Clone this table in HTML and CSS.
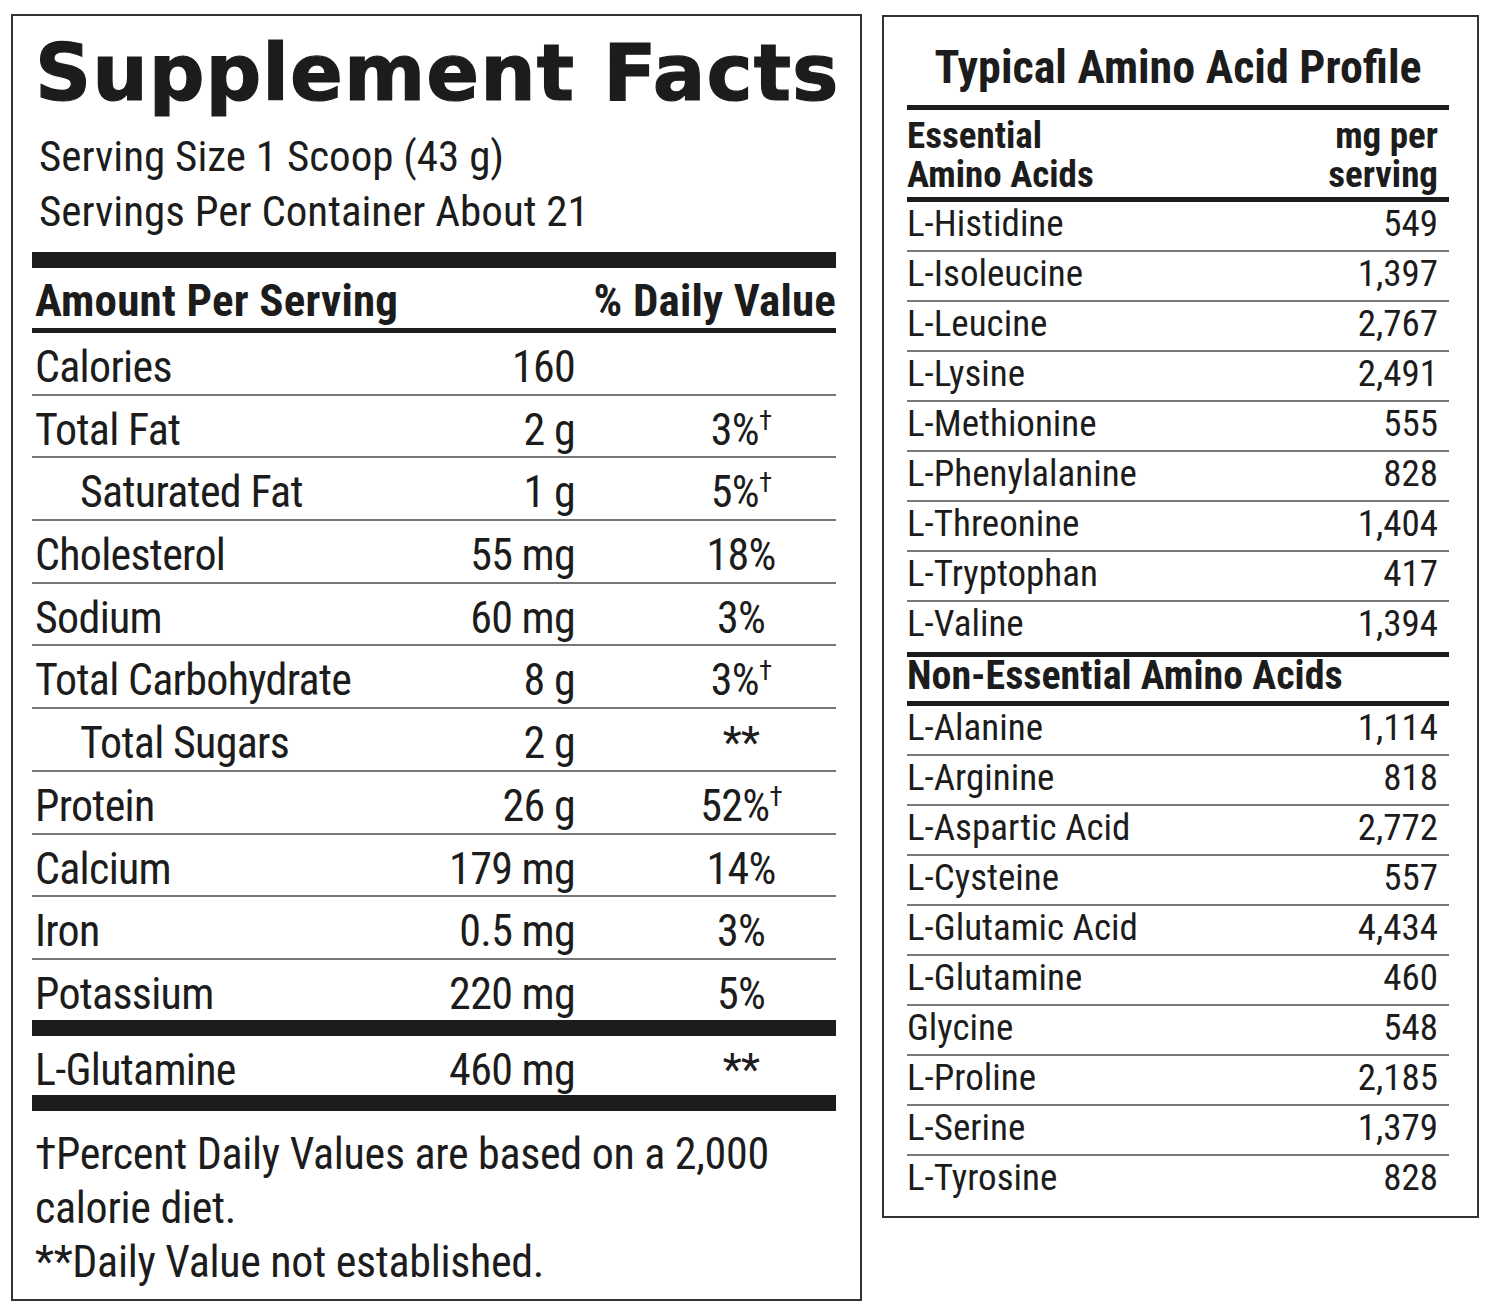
FILE: index.html
```html
<!DOCTYPE html>
<html lang="en">
<head>
<meta charset="utf-8">
<title>Supplement Facts</title>
<link rel="stylesheet" href="styles.css">
</head>
<body>
<main class="page">
  <section class="facts">
    <h1 class="facts-title">Supplement Facts</h1>
    <div class="serving">
      <div>Serving Size 1 Scoop (43 g)</div>
      <div>Servings Per Container About 21</div>
    </div>
    <div class="bar-thick"></div>
    <div class="facts-head">
      <span>Amount Per Serving</span>
      <span>% Daily Value</span>
    </div>
    <div class="bar-mid"></div>
    <div class="facts-rows">
      <div class="frow"><span class="fname">Calories</span><span class="famt">160</span><span class="fdv"></span></div>
      <div class="frow"><span class="fname">Total Fat</span><span class="famt">2 g</span><span class="fdv">3%<sup class="dag">†</sup></span></div>
      <div class="frow"><span class="fname sub">Saturated Fat</span><span class="famt">1 g</span><span class="fdv">5%<sup class="dag">†</sup></span></div>
      <div class="frow"><span class="fname">Cholesterol</span><span class="famt">55 mg</span><span class="fdv">18%</span></div>
      <div class="frow"><span class="fname">Sodium</span><span class="famt">60 mg</span><span class="fdv">3%</span></div>
      <div class="frow"><span class="fname">Total Carbohydrate</span><span class="famt">8 g</span><span class="fdv">3%<sup class="dag">†</sup></span></div>
      <div class="frow"><span class="fname sub">Total Sugars</span><span class="famt">2 g</span><span class="fdv">**</span></div>
      <div class="frow"><span class="fname">Protein</span><span class="famt">26 g</span><span class="fdv">52%<sup class="dag">†</sup></span></div>
      <div class="frow"><span class="fname">Calcium</span><span class="famt">179 mg</span><span class="fdv">14%</span></div>
      <div class="frow"><span class="fname">Iron</span><span class="famt">0.5 mg</span><span class="fdv">3%</span></div>
      <div class="frow last"><span class="fname">Potassium</span><span class="famt">220 mg</span><span class="fdv">5%</span></div>
    </div>
    <div class="bar-thick"></div>
    <div class="frow last extra"><span class="fname">L-Glutamine</span><span class="famt">460 mg</span><span class="fdv">**</span></div>
    <div class="bar-thick"></div>
    <div class="footnote">
      <div>†Percent Daily Values are based on a 2,000</div>
      <div>calorie diet.</div>
      <div>**Daily Value not established.</div>
    </div>
  </section>

  <section class="amino">
    <h2 class="amino-title">Typical Amino Acid Profile</h2>
    <div class="bar-amino"></div>
    <div class="amino-head">
      <div>Essential<br>Amino Acids</div>
      <div class="right">mg per<br>serving</div>
    </div>
    <div class="bar-amino"></div>
    <div class="arow"><span>L-Histidine</span><span>549</span></div>
    <div class="arow"><span>L-Isoleucine</span><span>1,397</span></div>
    <div class="arow"><span>L-Leucine</span><span>2,767</span></div>
    <div class="arow"><span>L-Lysine</span><span>2,491</span></div>
    <div class="arow"><span>L-Methionine</span><span>555</span></div>
    <div class="arow"><span>L-Phenylalanine</span><span>828</span></div>
    <div class="arow"><span>L-Threonine</span><span>1,404</span></div>
    <div class="arow"><span>L-Tryptophan</span><span>417</span></div>
    <div class="arow last"><span>L-Valine</span><span>1,394</span></div>
    <div class="bar-amino"></div>
    <div class="amino-sub">Non-Essential Amino Acids</div>
    <div class="bar-amino"></div>
    <div class="arow"><span>L-Alanine</span><span>1,114</span></div>
    <div class="arow"><span>L-Arginine</span><span>818</span></div>
    <div class="arow"><span>L-Aspartic Acid</span><span>2,772</span></div>
    <div class="arow"><span>L-Cysteine</span><span>557</span></div>
    <div class="arow"><span>L-Glutamic Acid</span><span>4,434</span></div>
    <div class="arow"><span>L-Glutamine</span><span>460</span></div>
    <div class="arow"><span>Glycine</span><span>548</span></div>
    <div class="arow"><span>L-Proline</span><span>2,185</span></div>
    <div class="arow"><span>L-Serine</span><span>1,379</span></div>
    <div class="arow last"><span>L-Tyrosine</span><span>828</span></div>
  </section>
</main>
</body>
</html>
```

FILE: styles.css
```css
* { box-sizing: border-box; }

html, body {
  margin: 0;
  padding: 0;
  background: #ffffff;
}

body {
  color: #1c1c1c;
  font-family: "Roboto Condensed", "Liberation Sans Narrow", "Liberation Sans", sans-serif;
}

.page {
  display: flex;
  align-items: flex-start;
  gap: 20px;
  padding: 14px 0 0 11px;
}

/* ---------- Supplement facts panel ---------- */
.facts {
  width: 851px;
  border: 2px solid #333;
  padding: 12px 24px 10px 19px;
}

.facts-title {
  margin: 0;
  padding-left: 3px;
  font-family: "DejaVu Sans", "Liberation Sans", sans-serif;
  font-weight: 700;
  font-size: 78px;
  line-height: 90px;
  letter-spacing: 1px;
  -webkit-text-stroke: 1.2px #1c1c1c;
  white-space: nowrap;
}

.serving {
  margin-top: 11px;
  padding-left: 7px;
  font-size: 43px;
  line-height: 55px;
  white-space: nowrap;
}

.bar-thick {
  height: 16px;
  background: #1c1c1c;
}

.serving + .bar-thick { margin-top: 13px; }

.facts-head {
  display: flex;
  justify-content: space-between;
  height: 60px;
  padding: 5px 0 0 3px;
  font-weight: 700;
  font-size: 45px;
  line-height: 55px;
  letter-spacing: 0.2px;
  white-space: nowrap;
}

.bar-mid {
  height: 5px;
  background: #1c1c1c;
}

.frow {
  display: grid;
  grid-template-columns: 1fr 160px 261px;
  height: 62.7px;
  padding-top: 8px;
  border-bottom: 2px solid #777;
  font-size: 44px;
  line-height: 52px;
  letter-spacing: -0.7px;
}

.frow.last {
  border-bottom: 0;
  height: 60px;
}

.frow.extra { height: 59px; }

.fname { padding-left: 3px; white-space: nowrap; }
.fname.sub { padding-left: 48px; }
.famt { text-align: right; white-space: nowrap; }
.fdv { text-align: center; padding-left: 71px; white-space: nowrap; }

.dag {
  font-size: 27px;
  line-height: 0;
  vertical-align: 15px;
}

.footnote {
  margin-top: 16px;
  padding-left: 3px;
  font-size: 44px;
  line-height: 54px;
  letter-spacing: -0.3px;
  white-space: nowrap;
}

/* ---------- Amino acid panel ---------- */
.amino {
  width: 597px;
  margin-top: 1px;
  border: 2px solid #333;
  padding: 20px 28px 10px 23px;
}

.amino-title {
  margin: 0 0 8px;
  text-align: center;
  font-weight: 700;
  font-size: 46px;
  line-height: 60px;
  white-space: nowrap;
}

.bar-amino {
  height: 5px;
  background: #1c1c1c;
}

.amino-head {
  display: flex;
  justify-content: space-between;
  padding: 6px 11px 3px 0;
  font-weight: 700;
  font-size: 37px;
  line-height: 39px;
  white-space: nowrap;
}

.amino-head .right { text-align: right; }

.arow {
  display: flex;
  justify-content: space-between;
  height: 50px;
  padding-right: 11px;
  border-bottom: 2px solid #777;
  font-size: 37px;
  line-height: 44px;
  white-space: nowrap;
}

.arow.last {
  border-bottom: 0;
  height: 50px;
}

.amino-sub {
  height: 44px;
  font-weight: 700;
  font-size: 40px;
  line-height: 38px;
  white-space: nowrap;
}
```
